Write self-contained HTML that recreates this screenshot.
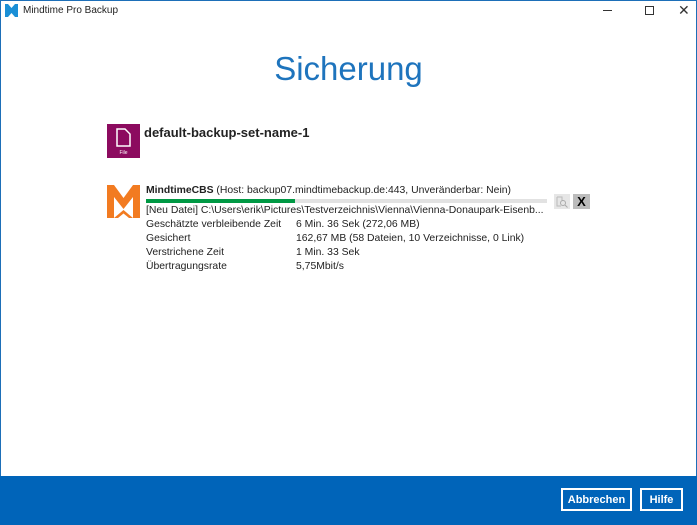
<!DOCTYPE html>
<html><head><style>
body{margin:0;width:697px;height:525px;position:relative;background:#fff;font-family:"Liberation Sans","DejaVu Sans",sans-serif;overflow:hidden}
.a{position:absolute}
.t{font-size:10.4px;color:#222;white-space:nowrap}
.btn{position:absolute;border:2px solid #fff;color:#fff;font-size:11px;font-weight:bold;box-sizing:border-box;height:23px;display:flex;align-items:center;justify-content:center}
</style></head><body>
<div class="a" style="left:0;top:0;width:697px;height:525px;box-sizing:border-box;border:1px solid #1d6fb8"></div>
<svg class="a" style="left:5px;top:4px" width="13" height="13" viewBox="0 0 13 13"><path d="M0 0h3l3.5 4L10 0h3v13h-3L6.5 9 3 13H0z" fill="#1a8fd6"/></svg>
<div class="a t" style="left:23px;top:5px;font-size:10px">Mindtime Pro Backup</div>
<div class="a" style="left:603px;top:10px;width:9px;height:1px;background:#333"></div>
<div class="a" style="left:645px;top:6px;width:7px;height:7px;border:1px solid #333"></div>
<div class="a t" style="left:678px;top:2px;font-size:14px;color:#333">✕</div>
<div class="a" style="left:0;top:50px;width:697px;text-align:center;font-size:33px;color:#1e74bd">Sicherung</div>
<div class="a" style="left:107px;top:124px;width:33px;height:34px;background:#8c0b5f"></div>
<svg class="a" style="left:116px;top:128px" width="15" height="19" viewBox="0 0 15 19"><path d="M1 1h8l5 5v12H1z" fill="none" stroke="#fff" stroke-width="1.5"/></svg>
<div class="a" style="left:107px;top:150px;width:33px;text-align:center;font-size:5px;color:#fff">File</div>
<div class="a t" style="left:144px;top:125px;font-size:13px;font-weight:bold;color:#222">default-backup-set-name-1</div>
<svg class="a" style="left:107px;top:185px" width="33" height="33" viewBox="0 0 33 33"><path d="M0 0h7l9.5 13L26 0h7v33h-7V12l-9.5 12L7 12v21H0z" fill="#f27b21"/><path d="M7 33l9.5-8L26 33h-4l-5.5-4.5L11 33z" fill="#f27b21"/></svg>
<div class="a t" style="left:146px;top:185px"><b>MindtimeCBS</b> (Host: backup07.mindtimebackup.de:443, Unveränderbar: Nein)</div>
<div class="a" style="left:146px;top:199px;width:401px;height:4px;background:#e2e2e2"></div>
<div class="a" style="left:146px;top:199px;width:149px;height:4px;background:#009944"></div>
<div class="a" style="left:554px;top:194px;width:16px;height:15px;background:#e6e6e6"></div>
<svg class="a" style="left:556px;top:196px" width="12" height="12" viewBox="0 0 12 12"><path d="M1 1h5v4M1 1v9h4" fill="none" stroke="#bbb"/><circle cx="7" cy="7" r="2.5" fill="none" stroke="#aaa"/><path d="M9 9l2.5 2.5" stroke="#aaa"/></svg>
<div class="a" style="left:573px;top:194px;width:17px;height:15px;background:#bcbcbc;text-align:center;font-weight:bold;font-size:13px;line-height:15px">X</div>
<div class="a t" style="left:146px;top:205px">[Neu Datei] C:\Users\erik\Pictures\Testverzeichnis\Vienna\Vienna-Donaupark-Eisenb...</div>
<div class="a t" style="left:146px;top:218px;line-height:14px">Geschätzte verbleibende Zeit<br>Gesichert<br>Verstrichene Zeit<br>Übertragungsrate</div>
<div class="a t" style="left:296px;top:218px;line-height:14px">6 Min. 36 Sek (272,06 MB)<br>162,67 MB (58 Dateien, 10 Verzeichnisse, 0 Link)<br>1 Min. 33 Sek<br>5,75Mbit/s</div>
<div class="a" style="left:0;top:476px;width:697px;height:49px;background:#0064b9"></div>
<div class="btn" style="left:561px;top:488px;width:71px">Abbrechen</div>
<div class="btn" style="left:640px;top:488px;width:43px">Hilfe</div>
</body></html>
